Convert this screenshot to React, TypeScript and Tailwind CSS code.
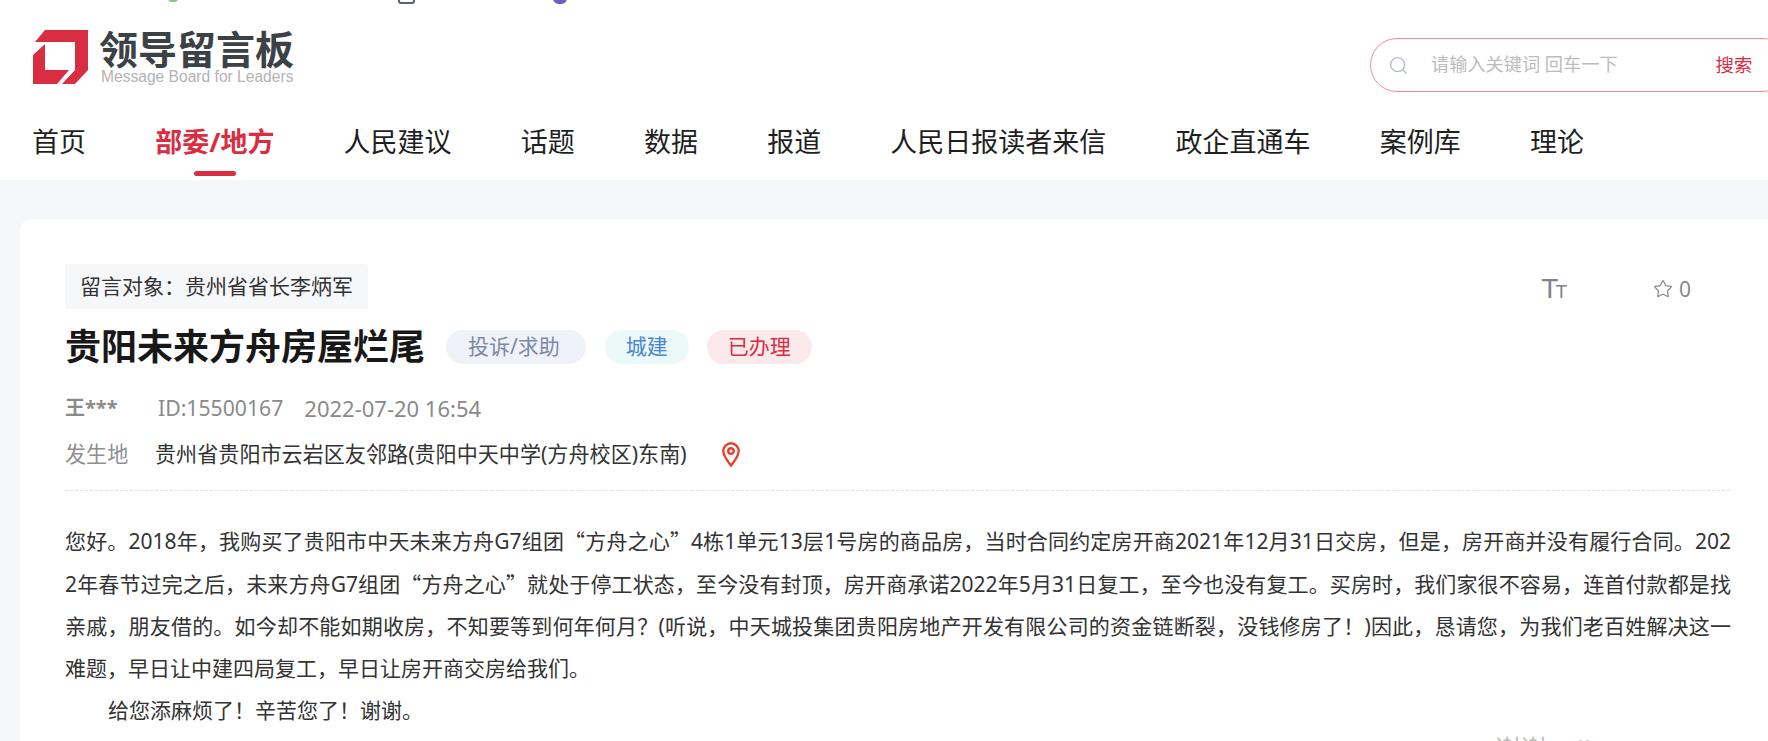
import { Search, Star } from "lucide-react";

const navItems = ["首页", "部委/地方", "人民建议", "话题", "数据", "报道", "人民日报读者来信", "政企直通车", "案例库", "理论"];

const bodyLines = [
  "您好。2018年，我购买了贵阳市中天未来方舟G7组团“方舟之心”4栋1单元13层1号房的商品房，当时合同约定房开商2021年12月31日交房，但是，房开商并没有履行合同。202",
  "2年春节过完之后，未来方舟G7组团“方舟之心”就处于停工状态，至今没有封顶，房开商承诺2022年5月31日复工，至今也没有复工。买房时，我们家很不容易，连首付款都是找",
  "亲戚，朋友借的。如今却不能如期收房，不知要等到何年何月？(听说，中天城投集团贵阳房地产开发有限公司的资金链断裂，没钱修房了！)因此，恳请您，为我们老百姓解决这一",
];

const font = "font-['Noto_Sans','Noto_Sans_CJK_SC',sans-serif]";

// curly quotes need the CJK face to get their full width
function BodyLine({ text }: { text: string }) {
  return (
    <div className="w-[1666px] text-justify [text-align-last:justify]">
      {text.split(/([“”])/).map((part, i) =>
        part === "“" || part === "”" ? (
          <span key={i} className="font-['Noto_Sans_CJK_SC',sans-serif]">{part}</span>
        ) : (
          part
        ),
      )}
    </div>
  );
}

function Logo() {
  return (
    <div className="flex items-start gap-[11px]">
      <svg className="mt-[2px]" width="56" height="55" viewBox="-1 0 56 55">
        <path fill="#d92d42" d="M12 0H55V40L42 54H29L42 40V12H2Z" />
        <path fill="#d92d42" d="M12 14L0 25V54H24L36 40H12Z" />
      </svg>
      <div className="flex flex-col w-[196px]">
        <span className="text-[39px] leading-[42px] font-bold text-[#3c4146] whitespace-nowrap">领导留言板</span>
        <span className="ml-[2px] font-['Liberation_Sans',sans-serif] text-[15.6px] leading-[14px] text-[#b3b3b3] whitespace-nowrap">Message Board for Leaders</span>
      </div>
    </div>
  );
}

export default function App() {
  return (
    <div lang="zh-CN" className={`${font} h-[741px] overflow-hidden bg-[#f6f7f9] text-[#1f1f1f]`}>
      <header className="bg-white h-[180px] flex flex-col relative">
        <span className="absolute left-[168px] top-[-3px] w-[10px] h-[5px] rounded-b-sm border-b-2 border-[#7bc88a]" />
        <span className="absolute left-[398px] top-[-6px] w-[17px] h-[10px] rounded-[3px] border-2 border-[#5a6270]" />
        <span className="absolute left-[553px] top-[-8px] w-[14px] h-[12px] rounded-full bg-[#6d5fc0]" />
        <div className="h-[108px] pl-[32px] pt-[28px] flex justify-between items-start">
          <Logo />
          <div className="flex items-center w-[420px] h-[54px] mt-[10px] shrink-0 rounded-[27px] border border-[#f58a96] pl-[17px] translate-x-[22px]">
            <Search size={21} strokeWidth={1.6} className="text-[#b8c0cc]" />
            <span className="ml-[22px] text-[18.2px] text-[#bcbcbc] whitespace-nowrap">请输入关键词 回车一下</span>
            <span className="ml-[98px] text-[18.4px] text-[#d92d42]">搜索</span>
          </div>
        </div>
        <nav className="flex gap-[69.2px] pl-[32px] text-[27px] leading-[40px] mt-[14px]">
          {navItems.map((item) => (
            <div key={item} className={`relative whitespace-nowrap ${item === "部委/地方" ? "font-bold text-[#d92d42]" : ""}`}>
              {item}
              {item === "部委/地方" && (
                <span className="absolute left-1/2 -translate-x-1/2 bottom-[-14px] w-[42px] h-[5px] rounded-full bg-[#d92d42]" />
              )}
            </div>
          ))}
        </nav>
      </header>

      <main className="ml-[20px] mt-[39px] bg-white rounded-tl-[12px] pl-[45px] pt-[45px] h-[600px]">
        <div className="flex justify-between items-start pr-[77px]">
          <div className="h-[45px] px-[15px] flex items-center bg-[#f6f7f9] rounded-[3px] text-[21px] text-[#333]">留言对象：贵州省省长李炳军</div>
          <div className="flex items-center text-[#8a8a8a] pt-[11px]">
            <span className="font-['Liberation_Sans',sans-serif] flex items-baseline text-[#7f8488] leading-none mr-[86px]">
              <span className="text-[28px]">T</span>
              <span className="text-[19px] ml-[-3px]">T</span>
            </span>
            <Star size={20} strokeWidth={1.5} />
            <span className="ml-[6px] text-[21px] leading-none">0</span>
          </div>
        </div>

        <div className="flex items-center mt-[13px] h-[50px]">
          <h1 className="text-[36px] font-bold text-[#181818] leading-[50px]">贵阳未来方舟房屋烂尾</h1>
          <span className="ml-[21px] h-[34px] pl-[22px] pr-[26px] flex items-center rounded-full bg-[#eff2f8] text-[#7c8aa6] text-[21px]">投诉/求助</span>
          <span className="ml-[19px] h-[34px] px-[21px] flex items-center rounded-full bg-[#ebfaf8] text-[#4a84d6] text-[21px]">城建</span>
          <span className="ml-[18px] h-[34px] px-[21px] flex items-center rounded-full bg-[#fbe9ec] text-[#d92d42] text-[21px]">已办理</span>
        </div>

        <div className="flex items-center mt-[21px] text-[#8a8a8a] text-[21px] leading-[30px]">
          <span className="w-[93px] font-bold text-[20px]">王***</span>
          <span className="text-[21.2px]">ID:15500167</span>
          <span className="ml-[21px] text-[22px]">2022-07-20 16:54</span>
        </div>

        <div className="flex items-center mt-[16px] leading-[30px] text-[21.1px]">
          <span className="w-[90px] text-[#8f8f8f]">发生地</span>
          <span className="text-[#333]">贵州省贵阳市云岩区友邻路(贵阳中天中学(方舟校区)东南)</span>
          <svg className="ml-[35px]" width="18" height="25" viewBox="0 0 18 25" fill="none" stroke="#e8402f" strokeWidth="2.4">
            <path d="M9 23.500C5 18.500 1.300 14 1.300 9a7.700 7.700 0 0 1 15.400 0C16.700 14 13 18.500 9 23.500Z" />
            <circle cx="9" cy="9" r="2.800" />
          </svg>
        </div>

        <div className="mr-[38px] mt-[21px] border-t border-dashed border-[#e2e2e2]" />

        <article className="mt-[28px] text-[21px] leading-[42px] text-[#333]">
          {bodyLines.map((line) => (
            <BodyLine key={line} text={line} />
          ))}
          <div>难题，早日让中建四局复工，早日让房开商交房给我们。</div>
          <div className="pl-[43px]">给您添麻烦了！辛苦您了！谢谢。</div>
          <div className="flex justify-end pr-[133px] mt-[3px] text-[26px] text-[#bdbdbd] leading-[30px]">谢谢 Wilson</div>
        </article>
      </main>
    </div>
  );
}
